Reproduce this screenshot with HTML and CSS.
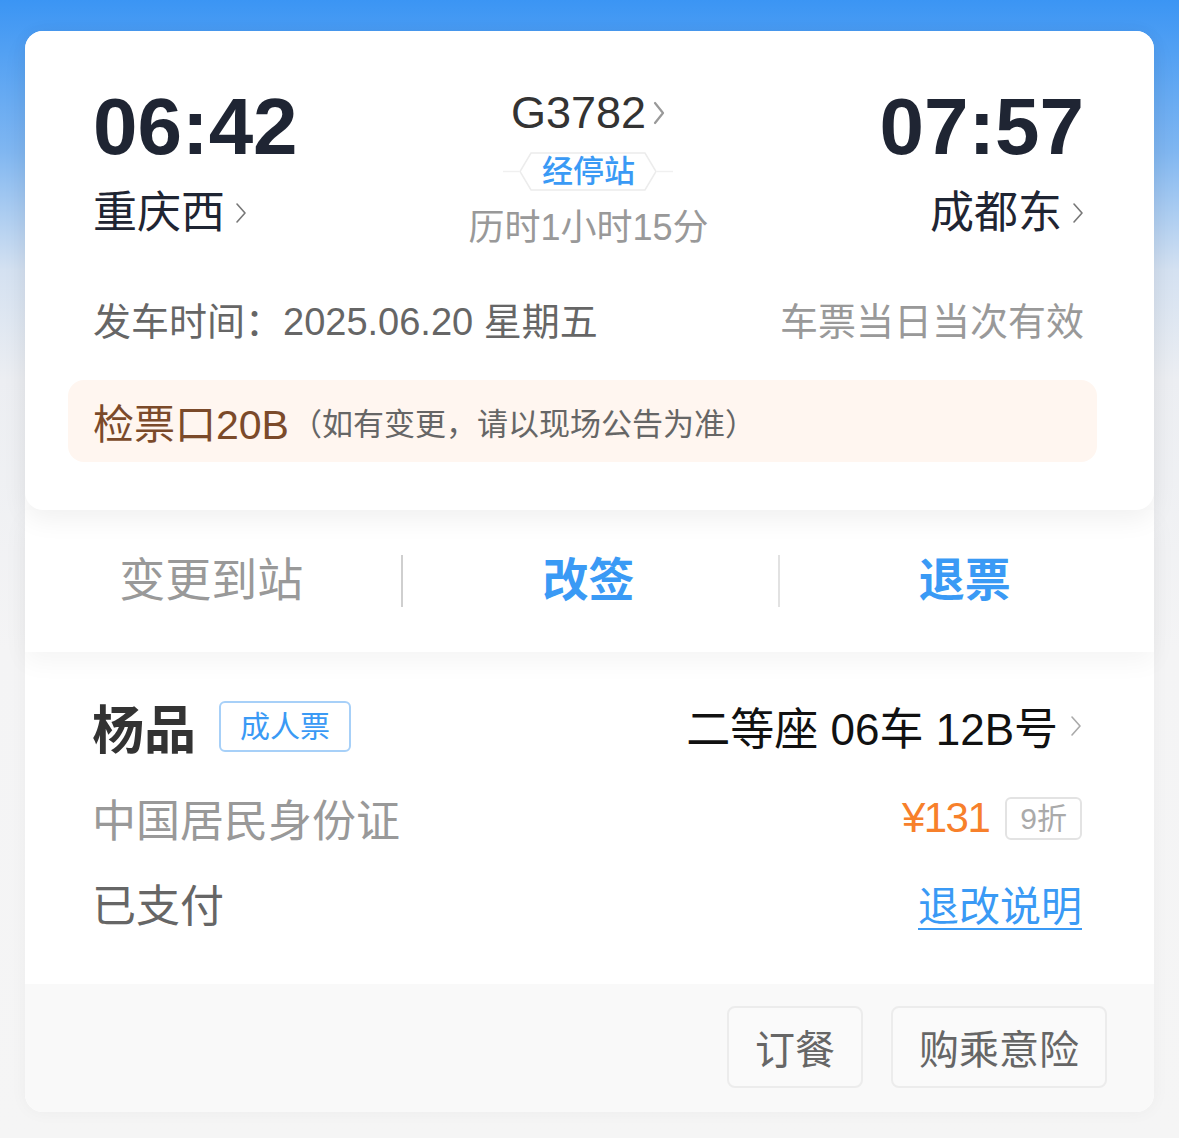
FILE: index.html
```html
<!DOCTYPE html>
<html lang="zh-CN">
<head>
    <meta charset="UTF-8">
    <meta name="viewport" content="width=device-width, initial-scale=1.0">
    <title>车票详情</title>
    <link rel="stylesheet" href="styles.css">
</head>
<body>
    <div class="ticket">
        <div class="trip">
            <div class="route">
                <div class="end">
                    <div class="time">06:42</div>
                    <div class="station">重庆西<svg class="chev" width="12" height="22" viewBox="0 0 12 22"><polyline points="2,2 10,11 2,20" /></svg></div>
                </div>
                <div class="train">
                    <div class="code">G3782<svg class="chev chev-code" width="14" height="26" viewBox="0 0 14 26"><polyline points="3,3 11,13 3,23" /></svg></div>
                    <div class="stops">
                        <svg class="stops-bg" width="170" height="39" viewBox="0 0 170 39">
                            <line x1="0" y1="19.5" x2="16" y2="19.5" class="stops-line" />
                            <line x1="154" y1="19.5" x2="170" y2="19.5" class="stops-line" />
                            <polygon points="28,1 142,1 153,19.5 142,38 28,38 17,19.5" />
                        </svg>
                        <span>经停站</span>
                    </div>
                    <div class="duration">历时1小时15分</div>
                </div>
                <div class="end end-right">
                    <div class="time">07:57</div>
                    <div class="station">成都东<svg class="chev" width="12" height="22" viewBox="0 0 12 22"><polyline points="2,2 10,11 2,20" /></svg></div>
                </div>
            </div>

            <div class="date-row">
                <span>发车时间：2025.06.20 星期五</span>
                <span class="valid">车票当日当次有效</span>
            </div>

            <div class="gate">
                <span class="gate-no">检票口20B</span>
                <span class="gate-note">（如有变更，请以现场公告为准）</span>
            </div>
        </div>

        <div class="actions">
            <div class="action">变更到站</div>
            <div class="action action-main">改签</div>
            <div class="action action-main">退票</div>
        </div>

        <div class="passenger">
            <div class="p-row p-row-first">
                <div class="who">
                    <span class="name">杨品</span>
                    <span class="kind">成人票</span>
                </div>
                <div class="seat">二等座 06车 12B号<svg class="chev" width="12" height="22" viewBox="0 0 12 22"><polyline points="2,2 10,11 2,20" /></svg></div>
            </div>
            <div class="p-row p-row-id">
                <span class="id-type">中国居民身份证</span>
                <div class="price-box">
                    <span class="price">¥131</span>
                    <span class="discount">9折</span>
                </div>
            </div>
            <div class="p-row p-row-pay">
                <span class="paid">已支付</span>
                <a href="#" class="rules">退改说明</a>
            </div>
        </div>

        <div class="extras">
            <button class="extra-btn">订餐</button>
            <button class="extra-btn">购乘意险</button>
        </div>
    </div>
</body>
</html>
```

FILE: styles.css
```css
body {
    margin: 0;
    font-family: "Liberation Sans", "Noto Sans CJK SC", sans-serif;
    background: linear-gradient(180deg, #3b95f4 0px, #7fb6f1 150px, #d4e1f1 270px, #eceef2 380px, #f4f4f5 650px, #f5f5f5 100%);
    min-height: 1138px;
    padding: 31px 25px 24px;
    box-sizing: border-box;
}

.ticket {
    background-color: #fff;
    border-radius: 18px;
    box-shadow: 0 0 18px rgba(0,0,0,0.04);
}

/* top part: times, stations, gate */
.trip {
    position: relative;
    z-index: 2;
    background-color: #fff;
    border-radius: 18px;
    padding: 56px 70px 48px 68px;
    box-shadow: 0 10px 26px rgba(0,0,0,0.06);
}

.route {
    display: grid;
    grid-template-columns: 1fr auto 1fr;
    align-items: start;
}

.end-right {
    text-align: right;
}

.time {
    font-size: 80px;
    line-height: 80px;
    font-weight: bold;
    color: #1f2533;
}

.station {
    margin-top: 20px;
    font-size: 44px;
    line-height: 52px;
    color: #1f2533;
    display: flex;
    align-items: center;
    gap: 10px;
}

.end-right .station {
    justify-content: flex-end;
}

.chev {
    fill: none;
    stroke: #777;
    stroke-width: 1.6;
    stroke-linecap: round;
    stroke-linejoin: round;
}

.train {
    display: flex;
    flex-direction: column;
    align-items: center;
}

.code {
    font-size: 45px;
    line-height: 52px;
    color: #333;
    display: flex;
    align-items: center;
    gap: 6px;
}

.chev-code {
    stroke: #999;
    stroke-width: 2.2;
}

.stops {
    position: relative;
    margin-top: 13px;
    width: 170px;
    height: 39px;
    display: flex;
    align-items: center;
    justify-content: center;
}

.stops-bg {
    position: absolute;
    left: 0;
    top: 0;
}

.stops-bg polygon {
    fill: #fff;
    stroke: #ececec;
    stroke-width: 1.5;
}

.stops-line {
    stroke: #f0f0f0;
    stroke-width: 1.5;
}

.stops span {
    position: relative;
    font-size: 31px;
    font-weight: 500;
    color: #3a9af5;
    line-height: 39px;
}

.duration {
    margin-top: 15px;
    font-size: 36px;
    line-height: 44px;
    color: #999;
}

.date-row {
    margin-top: 50px;
    display: flex;
    justify-content: space-between;
    font-size: 38px;
    line-height: 44px;
    color: #666;
}

.valid {
    color: #999;
}

.gate {
    margin: 36px -13px 0 -25px;
    height: 82px;
    border-radius: 16px;
    background-color: #fff6f0;
    padding: 0 25px;
    display: flex;
    align-items: center;
}

.gate-no {
    font-size: 41px;
    color: #7b4a2a;
}

.gate-note {
    font-size: 31px;
    color: #666;
    margin-left: 2px;
}

/* change / refund row */
.actions {
    position: relative;
    z-index: 1;
    display: grid;
    grid-template-columns: repeat(3, 1fr);
    height: 142px;
    align-items: center;
    background-color: #fff;
    box-shadow: 0 10px 24px rgba(0,0,0,0.045);
}

.action {
    text-align: center;
    font-size: 46px;
    line-height: 50px;
    color: #999;
    border-left: 2px solid #e2e2e2;
    padding: 0 4px 2px 0;
}

.action:first-child {
    border-left: none;
}

.action:nth-child(2) {
    border-left-color: #cfcfcf;
}

.action-main {
    color: #3a9af5;
    font-weight: bold;
}

/* passenger */
.passenger {
    background-color: #fff;
    padding: 46px 72px 53px 67px;
}

.p-row {
    display: flex;
    justify-content: space-between;
    align-items: center;
    height: 56px;
}

.p-row-id {
    margin-top: 36px;
}

.p-row-pay {
    margin-top: 29px;
}

.who {
    display: flex;
    align-items: center;
    gap: 23px;
}

.name {
    font-size: 52px;
    font-weight: bold;
    color: #333;
}

.kind {
    font-size: 30px;
    color: #3a9af5;
    border: 2px solid #a7d0f8;
    border-radius: 6px;
    padding: 0 19px;
    height: 47px;
    line-height: 47px;
}

.seat {
    font-size: 44px;
    color: #111;
    display: flex;
    align-items: center;
    gap: 12px;
}

.seat .chev {
    stroke: #aaa;
}

.id-type {
    font-size: 44px;
    color: #999;
}

.price-box {
    display: flex;
    align-items: center;
    gap: 16px;
}

.price {
    font-size: 42px;
    letter-spacing: -1.5px;
    color: #f7802b;
}

.discount {
    font-size: 30px;
    color: #aaa;
    border: 2px solid #e3e3e3;
    border-radius: 6px;
    padding: 0 13px;
    height: 39px;
    line-height: 39px;
}

.paid {
    font-size: 44px;
    color: #666;
}

.rules {
    font-size: 41px;
    color: #3a9af5;
    text-decoration: underline;
    text-underline-offset: 7px;
    text-decoration-thickness: 2px;
}

/* bottom buttons */
.extras {
    background-color: #f9f9f9;
    border-radius: 0 0 18px 18px;
    padding: 22px 47px 24px;
    display: flex;
    justify-content: flex-end;
    gap: 28px;
}

.extra-btn {
    font-family: inherit;
    font-size: 40px;
    color: #666;
    background-color: #fafafa;
    border: 2px solid #ececec;
    border-radius: 8px;
    height: 82px;
    padding: 0 26px;
}
```
